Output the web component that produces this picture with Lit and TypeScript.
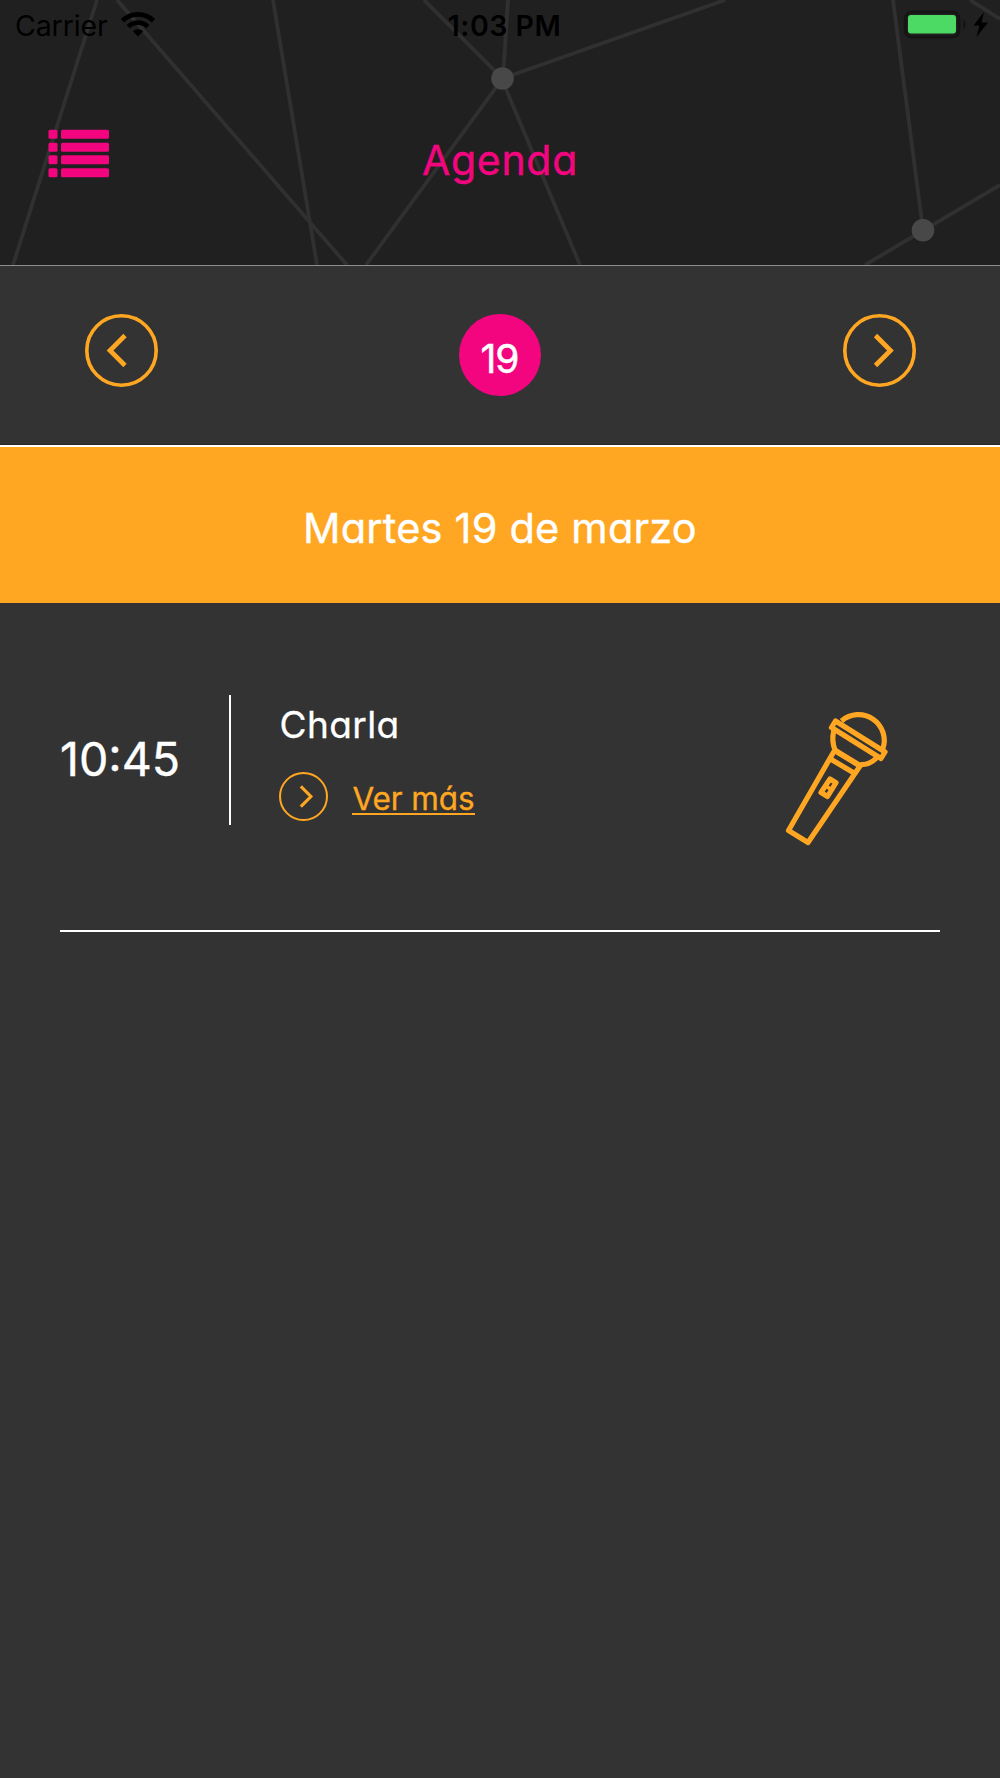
import { LitElement, html, css, svg } from "lit";
import { customElement, property } from "lit/decorators.js";

@customElement("circle-arrow")
class CircleArrow extends LitElement {
  @property() direction: "left" | "right" = "right";
  @property({ type: Number }) stroke = 3.6;

  static styles = css`
    :host { display: block; }
    svg { display: block; width: 100%; height: 100%; }
    .ring, .chevron { fill: none; stroke: #ffa722; }
  `;

  render() {
    const points = this.direction === "left" ? "40,21.5 25,36.5 40,51.5" : "32.5,21.5 47.5,36.5 32.5,51.5";
    return html`<svg viewBox="0 0 73 73">
      <circle class="ring" cx="36.5" cy="36.5" r=${36.5 - this.stroke / 2} stroke-width=${this.stroke}></circle>
      <polyline class="chevron" points=${points} stroke-width="4.7"></polyline>
    </svg>`;
  }
}

@customElement("agenda-item")
class AgendaItem extends LitElement {
  @property() time = "";
  @property() name = "";

  static styles = css`
    :host { display: block; font-feature-settings: "cv11"; }
    .row { display: flex; align-items: flex-start; height: 235px; border-bottom: 2px solid #fff; margin: 0 60px; }
    .time { width: 168px; font-size: 46.5px; line-height: 56px; letter-spacing: 0; margin-top: 36px; color: #fff; -webkit-text-stroke: 0.4px #fff; }
    .divider { width: 2.4px; height: 130px; background: #fff; margin-left: 0.6px; }
    .body { margin-left: 48.5px; flex: 1; color: #fff; }
    .name { font-size: 37px; line-height: 44px; letter-spacing: 0.4px; margin-top: 8px; -webkit-text-stroke: 0.3px #fff; }
    .more { display: flex; align-items: center; gap: 24px; margin-top: 25px; height: 49px; }
    .more circle-arrow { width: 49px; height: 49px; }
    .link { font-size: 31.5px; line-height: 38px; letter-spacing: -0.1px; color: #ffa722; border-bottom: 2px solid #ffa722; height: 33px; margin-top: 2px; -webkit-text-stroke: 0.3px #ffa722; }
    .mic { width: 140px; height: 170px; margin: -5px 30px 0 0; }
    .mic * { fill: none; stroke: #ffa722; stroke-width: 5.2; stroke-linejoin: round; }
    .mic .thin { stroke-width: 3.8; }
  `;

  render() {
    return html`<div class="row">
      <div class="time">${this.time}</div>
      <div class="divider"></div>
      <div class="body">
        <div class="name">${this.name}</div>
        <div class="more"><circle-arrow .stroke=${3}></circle-arrow><span class="link">Ver más</span></div>
      </div>
      <svg class="mic" viewBox="0 0 140 170">
        <path d="M71.500 31A25.800 25.800 0 0 1 112.800 59"/>
        <path d="M63.800 40.500C61.800 49 63 55 65 60"/>
        <path d="M107 67.500C102 72.500 96 75 90 74.500"/>
        <path d="M65.500 31L115 62L111 68.500L61.500 37.500Z"/>
        <path d="M64.500 60.500L18.500 140.500L38 152.500L90 76Z"/>
        <path d="M65.500 60.500L90 75.500M60.500 69L84 83"/>
        <path d="M60 89L66 92.700L57.500 106.500L51 102.500Z"/>
        <path class="thin" d="M55.800 96L61.800 99.800"/>
      </svg>
    </div>`;
  }
}

@customElement("app-root")
class AppRoot extends LitElement {
  static styles = css`
    :host { display: block; font-family: Inter, "Liberation Sans", sans-serif; font-feature-settings: "cv11"; }
    .screen { width: 1000px; height: 1778px; background: #333; overflow: hidden; }
    .header { position: relative; height: 265px; background: #202020; border-bottom: 1px solid #8e8e8e; }
    .mesh { position: absolute; inset: 0; width: 1000px; height: 265px; }
    .mesh path { stroke: #303030; stroke-width: 3.8; fill: none; }
    .mesh circle { fill: #484848; }
    .status, .toolbar { position: relative; display: grid; grid-template-columns: 1fr auto 1fr; }
    .status { height: 50px; align-items: center; font-size: 28.5px; color: #000; font-feature-settings: normal; }
    .carrier { display: flex; align-items: center; gap: 13px; padding: 1px 0 0 15px; letter-spacing: -0.1px; }
    .wifi { width: 36px; height: 26px; margin: -3px 0 0 -1px; }
    .wifi .arc { fill: none; stroke: #000; stroke-width: 4.8; }
    .clock { font-weight: 600; letter-spacing: 0.5px; padding: 1px 0 0 9px; }
    .battery { justify-self: end; width: 97px; height: 30px; margin-top: -2px; }
    .toolbar { height: 215px; }
    .menu { width: 62px; height: 49px; margin: 79px 0 0 48px; fill: #f30580; }
    .title { font-size: 41px; line-height: 48px; letter-spacing: 0.7px; color: #f30580; margin-top: 86px; -webkit-text-stroke: 0.4px #f30580; }
    .days { display: grid; grid-template-columns: 1fr auto 1fr; align-items: flex-start; height: 179px; padding: 48px 84.5px 0; border-bottom: 1px solid #262626; box-sizing: border-box; }
    .days circle-arrow { width: 73px; height: 73px; }
    .days .next { justify-self: end; }
    .day { width: 82px; height: 82px; border-radius: 50%; background: #f30580; color: #fff; font-size: 39px; line-height: 90px; text-align: center; letter-spacing: -1px; text-indent: -1px; -webkit-text-stroke: 0.5px #fff; }
    .date { height: 156px; border-top: 2px solid #fff; background: #ffa722; color: #fff; font-size: 41.5px; line-height: 163px; text-align: center; letter-spacing: 0.2px; -webkit-text-stroke: 0.4px #fff; }
    .list { padding-top: 92px; }
  `;

  render() {
    const bars = [0, 13, 25.5, 38.5];
    return html`<div class="screen">
      <div class="header">
        <svg class="mesh" viewBox="0 0 1000 265">
          <path d="M97 0L13 265M117 0L347 265M273 0L317 265M424 0L502.500 78.500L725 0M508 0L503 78L366 265M503 82L580 265M893 0L923 230M865 265L1000 185M970 0L1000 19"/>
          <circle cx="502.500" cy="78.500" r="11.300"/><circle cx="923" cy="230.300" r="11.300"/>
        </svg>
        <div class="status">
          <div class="carrier"><span>Carrier</span>
            <svg class="wifi" viewBox="0 0 36 26">
              <path class="arc" d="M2.500 9.800A22 22 0 0 1 33.500 9.800"/>
              <path class="arc" d="M8.200 15.600A14 14 0 0 1 27.800 15.600"/>
              <path d="M18 25.500L12.800 20.300A7.500 7.500 0 0 1 23.200 20.300Z"/>
            </svg>
          </div>
          <div class="clock">1:03 PM</div>
          <svg class="battery" viewBox="0 0 97 30">
            <rect x="2.300" y="3" width="53.700" height="25" rx="6.500" fill="none" stroke="#151515" stroke-width="3"/>
            <rect x="5" y="6" width="48" height="18.500" rx="3" fill="#4cd964"/>
            <path d="M60 10.500Q63 12 63 15.300T60 20.500Z" fill="#151515"/>
            <path d="M81 3L70.500 16.500H76.500L73.500 28L85 13.500H78.500Z"/>
          </svg>
        </div>
        <div class="toolbar">
          <svg class="menu" viewBox="0 0 62 49">
            ${bars.map((y) => svg`<rect x="0.500" y=${y + 0.7} width="9" height="9" rx="1.500"></rect><rect x="13" y=${y + 0.7} width="48" height="9" rx="1.500"></rect>`)}
          </svg>
          <div class="title">Agenda</div>
        </div>
      </div>
      <div class="days">
        <circle-arrow direction="left"></circle-arrow>
        <div class="day">19</div>
        <circle-arrow class="next" direction="right"></circle-arrow>
      </div>
      <div class="date">Martes 19 de marzo</div>
      <div class="list"><agenda-item time="10:45" name="Charla"></agenda-item></div>
    </div>`;
  }
}
